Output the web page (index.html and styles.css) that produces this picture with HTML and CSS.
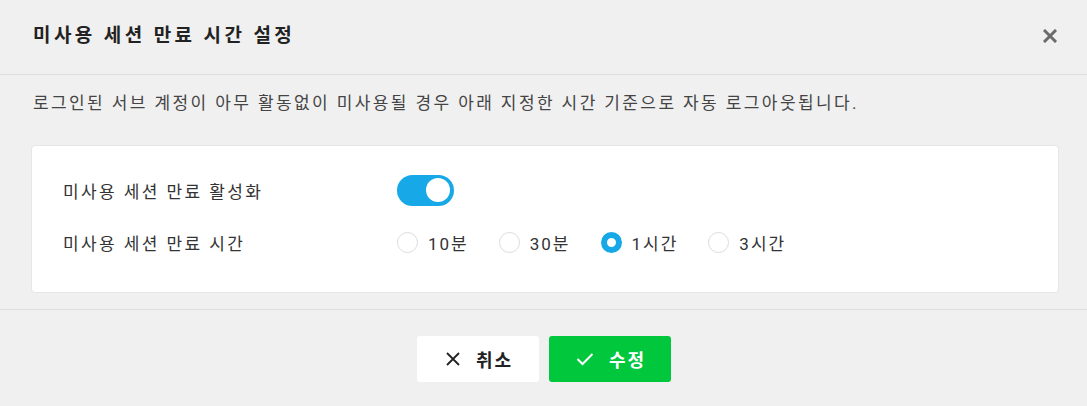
FILE: index.html
```html
<!DOCTYPE html>
<html lang="ko">
<head>
<meta charset="utf-8">
<link rel="stylesheet" href="styles.css">
</head>
<body>
<div class="dialog">
  <div class="dialog-header">
    <h1 class="title">미사용 세션 만료 시간 설정</h1>
    <button class="close" aria-label="닫기">
      <svg width="14" height="14" viewBox="0 0 14 14"><path d="M2 2L12 12M12 2L2 12" stroke="#6b6b6b" stroke-width="3" stroke-linecap="square"/></svg>
    </button>
  </div>
  <div class="dialog-body">
    <p class="desc">로그인된 서브 계정이 아무 활동없이 미사용될 경우 아래 지정한 시간 기준으로 자동 로그아웃됩니다.</p>
    <div class="card">
      <div class="row">
        <div class="label">미사용 세션 만료 활성화</div>
        <div class="control"><span class="toggle on"><span class="knob"></span></span></div>
      </div>
      <div class="row">
        <div class="label">미사용 세션 만료 시간</div>
        <div class="control radios">
          <label class="radio"><span class="dot"></span><span class="rtext">10분</span></label>
          <label class="radio"><span class="dot"></span><span class="rtext">30분</span></label>
          <label class="radio checked"><span class="dot"></span><span class="rtext">1시간</span></label>
          <label class="radio"><span class="dot"></span><span class="rtext">3시간</span></label>
        </div>
      </div>
    </div>
  </div>
  <div class="dialog-footer">
    <button class="btn btn-cancel">
      <svg width="16" height="16" viewBox="0 0 16 16"><path d="M2 2L14 14M14 2L2 14" stroke="#222" stroke-width="1.8"/></svg>
      <span class="btext">취소</span>
    </button>
    <button class="btn btn-save">
      <svg width="18" height="16" viewBox="0 0 18 16"><path d="M1.5 8L6.5 13L16.5 3" stroke="#fff" stroke-width="2" fill="none"/></svg>
      <span class="btext">수정</span>
    </button>
  </div>
</div>
</body>
</html>
```
FILE: styles.css
```css
* { box-sizing: border-box; }
html, body { margin: 0; padding: 0; }
body {
  background: #f0f0f0;
  font-family: Roboto, "Noto Sans CJK KR", sans-serif;
  color: #333;
  width: 1087px;
  height: 406px;
  overflow: hidden;
}
.dialog { width: 1087px; }
.dialog-header {
  height: 75px;
  border-bottom: 1px solid #dedede;
  display: flex;
  align-items: center;
  justify-content: space-between;
  padding: 0 28px 8px 33px;
}
.title {
  margin: 0;
  font-size: 19px;
  font-weight: 700;
  color: #222;
  letter-spacing: 3.4px;
}
.close {
  border: 0;
  background: none;
  padding: 0;
  width: 18px;
  height: 18px;
  display: flex;
  align-items: center;
  justify-content: center;
  margin-top: 6px;
}
.dialog-body { padding: 16px 28px 0 31px; }
.desc {
  margin: 0 0 30px 2px;
  font-size: 17px;
  line-height: 24px;
  color: #444;
  letter-spacing: 2.4px;
}
.card {
  background: #fff;
  border: 1px solid #e6e6e6;
  border-radius: 4px;
  padding: 29px 32px 35px 31px;
  display: flex;
  flex-direction: column;
  gap: 22px;
}
.row { display: flex; align-items: center; height: 30px; }
.label {
  width: 334px;
  font-size: 17px;
  color: #333;
  letter-spacing: 2.4px;
}
.control { display: flex; align-items: center; }
.toggle {
  width: 57px;
  height: 31px;
  border-radius: 16px;
  background: #17a8e8;
  display: flex;
  align-items: center;
  justify-content: flex-end;
  padding-right: 4px;
}
.knob {
  width: 24px;
  height: 24px;
  border-radius: 50%;
  background: #fff;
}
.radios { gap: 30px; }
.radio { display: flex; align-items: center; gap: 10px; font-size: 17px; color: #333; letter-spacing: 2px; }
.dot {
  width: 21px;
  height: 21px;
  border-radius: 50%;
  border: 1px solid #dcdcdc;
  background: #fff;
}
.radio.checked .dot { border: 6px solid #17a8e8; }
.dialog-footer {
  margin-top: 16px;
  border-top: 1px solid #dedede;
  display: flex;
  justify-content: center;
  gap: 10px;
  padding-top: 26px;
  padding-left: 1px;
}
.btn {
  width: 122px;
  height: 46px;
  border: 0;
  border-radius: 3px;
  display: flex;
  align-items: center;
  justify-content: center;
  gap: 15px;
  font-family: Roboto, "Noto Sans CJK KR", sans-serif;
  font-size: 18px;
  font-weight: 700;
  letter-spacing: 2px;
}
.btext { margin-right: -2px; }
.btn-cancel { background: #fff; color: #222; }
.btn-save { background: #00c73c; color: #fff; }
```
